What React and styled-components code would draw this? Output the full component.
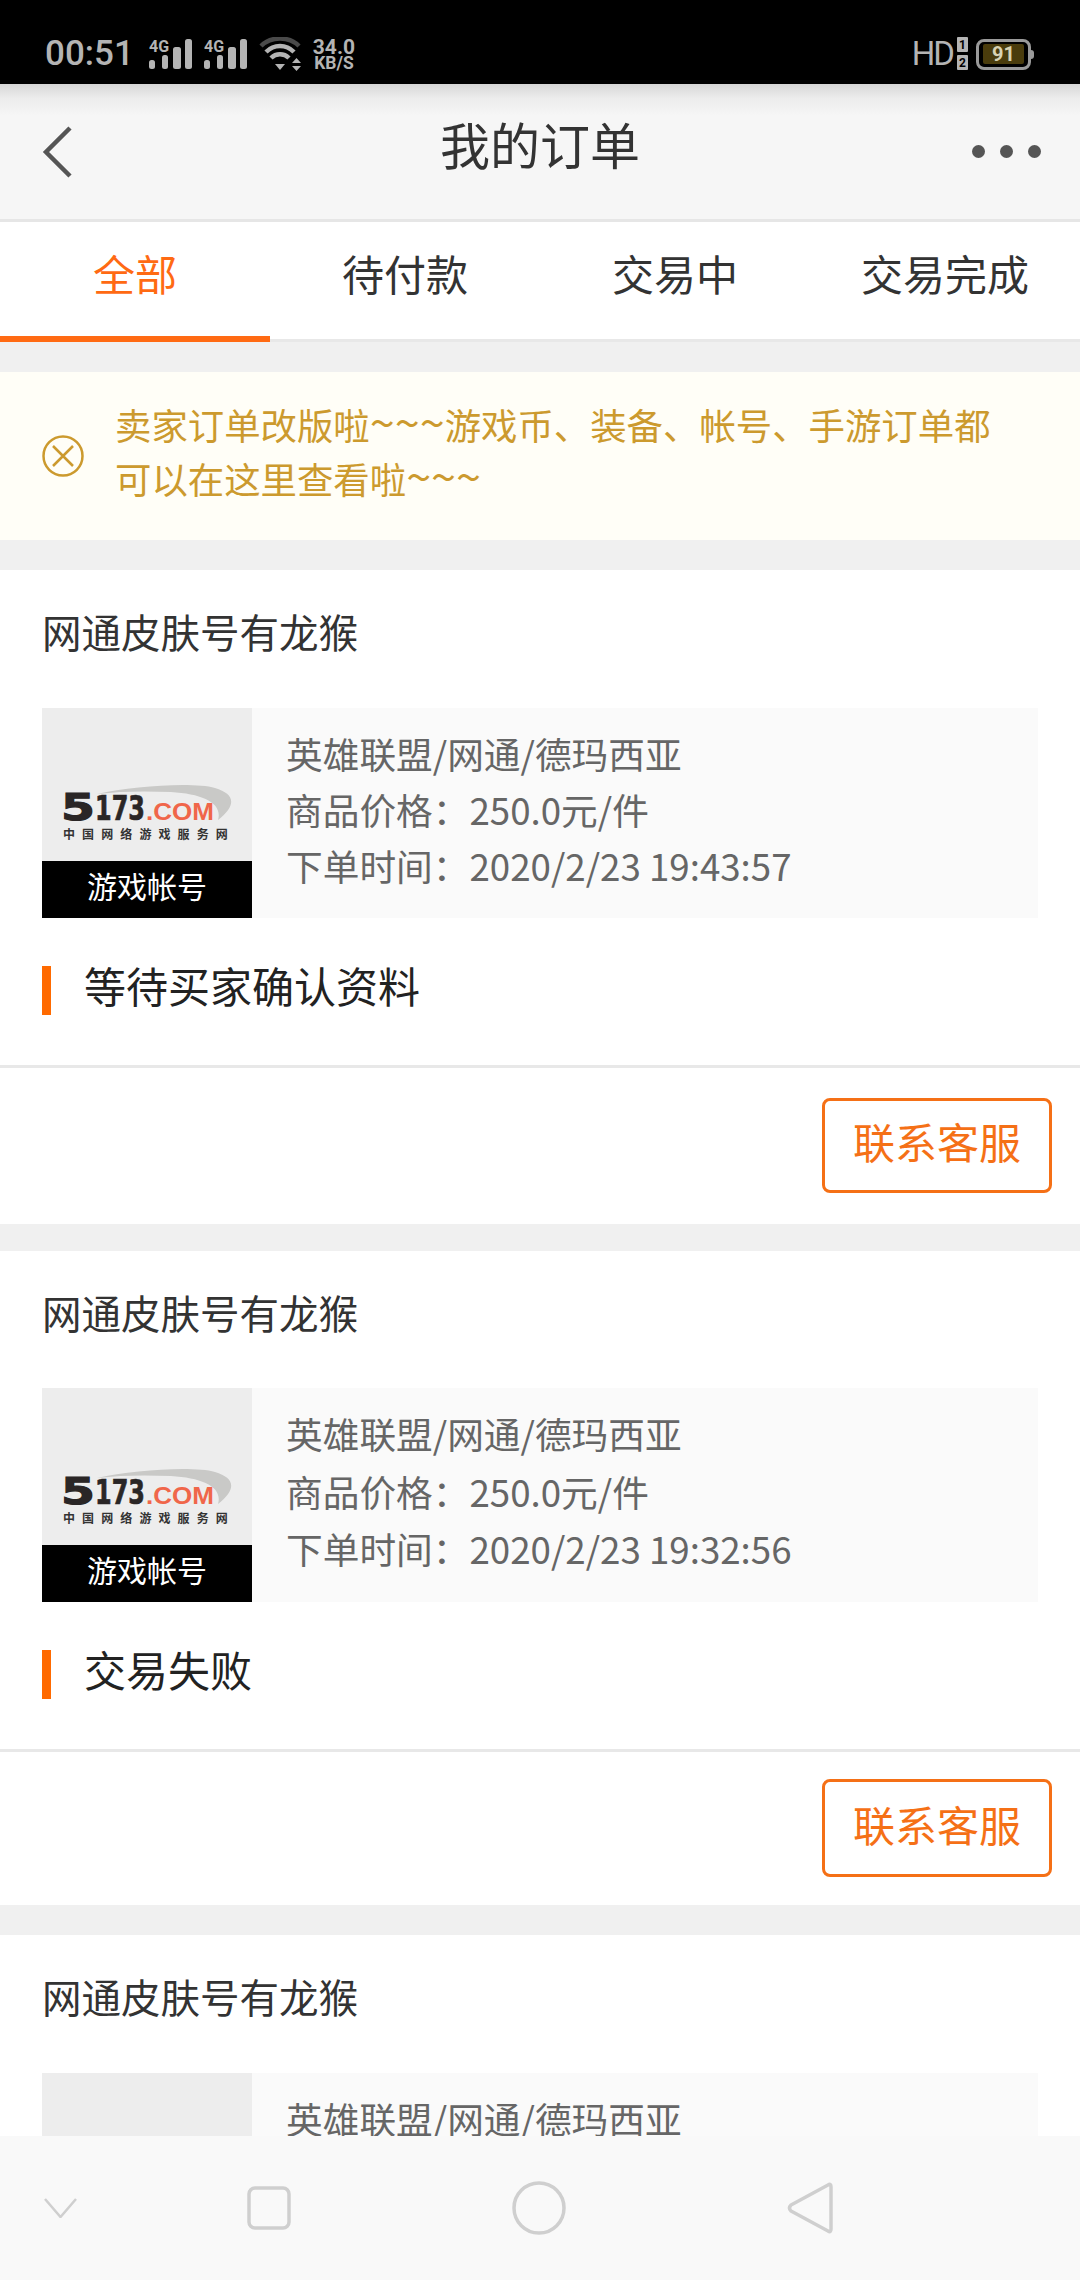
import React from "react";
import styled, { createGlobalStyle } from "styled-components";

const GlobalStyle = createGlobalStyle`
  html, body {
    margin: 0;
    padding: 0;
    background: #f0f0f0;
  }
  * {
    box-sizing: border-box;
  }
`;

const Page = styled.div`
  width: 1080px;
  height: 2280px;
  display: flex;
  flex-direction: column;
  overflow: hidden;
  background: #f0f0f0;
  font-family: "Noto Sans CJK SC", "Noto Sans", sans-serif;
`;

const StatusBar = styled.div`
  height: 84px;
  flex: none;
  background: #000;
  display: flex;
  align-items: center;
  justify-content: space-between;
  padding: 24px 49px 0 45px;
  color: #b4b4b4;
  font-family: Roboto, sans-serif;
`;

const StatusGroup = styled.div`
  display: flex;
  align-items: center;
  gap: ${(p) => p.$gap || 0}px;
`;

const Clock = styled.span`
  font-size: 35px;
  line-height: 40px;
  font-weight: 500;
  margin-right: 3px;
`;

const Speed = styled.span`
  display: flex;
  flex-direction: column;
  font-weight: 700;
  text-align: center;
`;

const SpeedValue = styled.span`
  font-size: 21px;
  line-height: 18px;
`;

const SpeedUnit = styled.span`
  font-size: 17.5px;
  line-height: 15px;
`;

const HdText = styled.span`
  font-size: 33px;
  line-height: 40px;
  letter-spacing: -2px;
  margin-right: 4px;
`;

const Battery = styled.span`
  width: 55px;
  height: 31px;
  border: 3px solid #9a9a9a;
  border-radius: 8px;
  display: flex;
  align-items: center;
  justify-content: center;
  margin-left: 8px;
  position: relative;
  &::after {
    content: "";
    position: absolute;
    right: -6px;
    top: 8px;
    width: 3px;
    height: 9px;
    background: #9a9a9a;
    border-radius: 0 3px 3px 0;
  }
`;

const BatteryFill = styled.span`
  width: 41px;
  height: 20px;
  border-radius: 2px;
  background: #4a3c0c;
  color: #d8d3b4;
  font-size: 20px;
  line-height: 20px;
  font-weight: 700;
  text-align: center;
`;

const Header = styled.header`
  height: 138px;
  flex: none;
  display: flex;
  align-items: center;
  justify-content: space-between;
  padding: 0 39px 0 42px;
  background: linear-gradient(#d6d6d6 0, #ececec 14px, #f6f6f6 32px);
  border-bottom: 3px solid #e6e6e6;
  position: relative;
`;

const HeaderTitle = styled.h1`
  position: absolute;
  left: 0;
  right: 0;
  top: 29px;
  margin: 0;
  text-align: center;
  font-size: 50px;
  line-height: 60px;
  font-weight: 400;
  color: #333;
`;

const Dots = styled.div`
  display: flex;
  gap: 15px;
`;

const Dot = styled.span`
  width: 13px;
  height: 13px;
  border-radius: 50%;
  background: #555;
`;

const Tabs = styled.nav`
  height: 120px;
  flex: none;
  display: flex;
  background: #fff;
  border-bottom: 3px solid #e8e8e8;
`;

const Tab = styled.div`
  width: 270px;
  height: 120px;
  padding-top: 23px;
  text-align: center;
  font-size: 42px;
  line-height: 56px;
  color: ${(p) => (p.$active ? "#ff6a13" : "#333")};
  border-bottom: 6px solid ${(p) => (p.$active ? "#ff6a13" : "transparent")};
`;

const Content = styled.main`
  flex: 1;
  min-height: 0;
  overflow: hidden;
  padding-top: 30px;
`;

const Notice = styled.div`
  height: 168px;
  margin-bottom: 30px;
  display: flex;
  align-items: center;
  gap: 31px;
  padding: 0 40px 0 42px;
  background: #fffef7;
  color: #cc9a2e;
  font-size: 36.4px;
  line-height: 54px;
`;

const NoticeText = styled.p`
  margin: 0;
  width: 900px;
  padding-bottom: 11px;
`;

const Tilde = styled.span`
  font-size: 45px;
  line-height: 0;
`;

const Card = styled.section`
  background: #fff;
  margin-bottom: ${(p) => p.$after}px;
`;

const CardTitle = styled.h2`
  margin: 0;
  height: ${(p) => p.$h}px;
  padding: 33px 0 0 42px;
  font-size: 39.5px;
  line-height: 56px;
  font-weight: 400;
  color: #333;
`;

const Product = styled.div`
  display: flex;
  height: ${(p) => p.$h}px;
  margin: 0 42px;
  background: #fafafa;
`;

const Thumb = styled.div`
  width: 210px;
  flex: none;
  background: #ededed;
  display: flex;
  flex-direction: column;
  justify-content: flex-end;
`;

const ThumbLabel = styled.div`
  height: 57px;
  background: #000;
  color: #fff;
  font-size: 30px;
  line-height: 49px;
  text-align: center;
`;

const Logo = styled.svg`
  display: block;
  width: 172px;
  height: 56px;
  margin: 0 0 20px 21px;
`;

const Info = styled.div`
  padding: 17px 0 0 34px;
  font-size: 36.7px;
  line-height: ${(p) => p.$lh}px;
  color: #666;
`;

const InfoLine = styled.div`
  white-space: nowrap;
`;

const OrderStatus = styled.div`
  height: 147px;
  padding: 48px 0 0 42px;
`;

const StatusLabel = styled.div`
  height: 49px;
  padding-left: 33px;
  border-left: 9px solid #ff6a00;
  font-size: 42px;
  line-height: 38px;
  color: #222;
`;

const CardFoot = styled.div`
  height: ${(p) => p.$h}px;
  border-top: 3px solid #e8e8e8;
  display: flex;
  justify-content: flex-end;
  padding: ${(p) => p.$top}px 28px 0 0;
`;

const ContactButton = styled.button`
  width: 230px;
  height: ${(p) => p.$h}px;
  padding: 0 0 9px;
  background: #fff;
  border: 3px solid #f57016;
  border-radius: 8px;
  color: #f57016;
  font-family: inherit;
  font-size: 42px;
  line-height: 56px;
`;

const NavBar = styled.div`
  height: 144px;
  flex: none;
  background: #f9f9f9;
  position: relative;
  z-index: 1;
  display: flex;
`;

const NavSlot = styled.div`
  width: ${(p) => p.$w}px;
  display: flex;
  align-items: center;
  justify-content: center;
`;

const Signal = () => (
  <svg width="43" height="32" viewBox="0 0 43 32" style={{ display: "block" }}>
    <text x="0" y="14" fontFamily="Roboto, sans-serif" fontWeight="700" fontSize="16" fill="#b4b4b4">4G</text>
    <rect x="0" y="22" width="6" height="9" rx="2.5" fill="#b4b4b4" />
    <rect x="13" y="17" width="6" height="14" rx="2.5" fill="#b4b4b4" />
    <rect x="24" y="9" width="8" height="22" rx="2.5" fill="#b4b4b4" />
    <rect x="36" y="1" width="7" height="30" rx="2.5" fill="#b4b4b4" />
  </svg>
);

const Wifi = () => (
  <svg width="42" height="34" viewBox="0 0 42 34" fill="none">
    <path d="M2 9 C12 -1 30 -1 40 9" stroke="#4a4a4a" strokeWidth="4.5" />
    <path d="M7 15 C15 7 27 7 35 15" stroke="#b4b4b4" strokeWidth="4.5" />
    <path d="M12 21 C17 16 25 16 30 21" stroke="#b4b4b4" strokeWidth="4.5" />
    <path d="M16 27 L26 27 L21 33 Z" fill="#b4b4b4" />
    <path d="M33 26 L37.5 21 L42 26 Z M33 29 L42 29 L37.5 34 Z" fill="#b4b4b4" />
  </svg>
);

const SimBadge = () => (
  <svg width="11" height="34" viewBox="0 0 11 34" style={{ display: "block" }}>
    <rect x="0" y="0" width="11" height="15" rx="1" fill="#b4b4b4" />
    <rect x="0" y="18" width="11" height="15" rx="1" fill="#b4b4b4" />
    <text x="5.5" y="12" textAnchor="middle" fontFamily="Roboto, sans-serif" fontWeight="700" fontSize="12" fill="#000">1</text>
    <text x="5.5" y="30" textAnchor="middle" fontFamily="Roboto, sans-serif" fontWeight="700" fontSize="12" fill="#000">2</text>
  </svg>
);

const LogoMark = () => (
  <Logo viewBox="0 0 172 56">
    <path d="M34 9 C70 1 130 -3 152 3 C172 9 174 20 155 35 C160 18 140 9 108 7 C84 6 58 6 34 9 Z" fill="#c9c9c7" />
    <text x="-2" y="35" fontFamily="'DejaVu Sans', sans-serif" fontWeight="700" fontSize="38" textLength="34" lengthAdjust="spacingAndGlyphs" stroke="#2a2626" strokeWidth="1.2" fill="#2a2626">5</text>
    <text x="32" y="35" fontFamily="'DejaVu Sans', sans-serif" fontWeight="700" fontSize="33" textLength="50" lengthAdjust="spacingAndGlyphs" stroke="#2a2626" strokeWidth="0.7" fill="#2a2626">173</text>
    <text x="83" y="35" fontFamily="'Liberation Sans', sans-serif" fontWeight="700" fontSize="24" textLength="68" lengthAdjust="spacingAndGlyphs" fill="#f0664a">.COM</text>
    <text x="0" y="54" fontFamily="'Noto Sans CJK SC', sans-serif" fontWeight="700" fontSize="12" letterSpacing="7.1" fill="#333">中国网络游戏服务网</text>
  </Logo>
);

const orders = [
  { time: "2020/2/23 19:43:57", status: "等待买家确认资料", titleH: 138, productH: 210, lineH: 56, footH: 159, footTop: 30, btnH: 95, after: 27 },
  { time: "2020/2/23 19:32:56", status: "交易失败", titleH: 137, productH: 214, lineH: 57.5, footH: 156, footTop: 27, btnH: 98, after: 30 },
  { time: "2020/2/23 19:30:12", status: "交易失败", titleH: 138, productH: 210, lineH: 56, footH: 159, footTop: 30, btnH: 95, after: 0 },
];

const tabs = ["全部", "待付款", "交易中", "交易完成"];

export default function App() {
  return (
    <Page>
      <GlobalStyle />
      <StatusBar>
        <StatusGroup $gap={12}>
          <Clock>00:51</Clock>
          <Signal />
          <Signal />
          <Wifi />
          <Speed>
            <SpeedValue>34.0</SpeedValue>
            <SpeedUnit>KB/S</SpeedUnit>
          </Speed>
        </StatusGroup>
        <StatusGroup>
          <HdText>HD</HdText>
          <SimBadge />
          <Battery>
            <BatteryFill>91</BatteryFill>
          </Battery>
        </StatusGroup>
      </StatusBar>

      <Header>
        <svg width="32" height="54" viewBox="0 0 32 54" fill="none">
          <path d="M28 3 L4 27 L28 51" stroke="#555" strokeWidth="4.5" />
        </svg>
        <HeaderTitle>我的订单</HeaderTitle>
        <Dots>
          <Dot />
          <Dot />
          <Dot />
        </Dots>
      </Header>

      <Tabs>
        {tabs.map((t, i) => (
          <Tab key={t} $active={i === 0}>
            {t}
          </Tab>
        ))}
      </Tabs>

      <Content>
        <Notice>
          <svg width="42" height="42" viewBox="0 0 42 42" fill="none" stroke="#cc9a2e" strokeWidth="2.5">
            <circle cx="21" cy="21" r="19.5" />
            <path d="M11 11 L31 31 M31 11 L11 31" />
          </svg>
          <NoticeText>
            卖家订单改版啦<Tilde>~~~</Tilde>游戏币、装备、帐号、手游订单都可以在这里查看啦<Tilde>~~~</Tilde>
          </NoticeText>
        </Notice>

        {orders.map((o, i) => (
          <Card key={i} $after={o.after}>
            <CardTitle $h={o.titleH}>网通皮肤号有龙猴</CardTitle>
            <Product $h={o.productH}>
              <Thumb>
                <LogoMark />
                <ThumbLabel>游戏帐号</ThumbLabel>
              </Thumb>
              <Info $lh={o.lineH}>
                <InfoLine>英雄联盟/网通/德玛西亚</InfoLine>
                <InfoLine>商品价格：250.0元/件</InfoLine>
                <InfoLine>下单时间：{o.time}</InfoLine>
              </Info>
            </Product>
            <OrderStatus>
              <StatusLabel>{o.status}</StatusLabel>
            </OrderStatus>
            <CardFoot $h={o.footH} $top={o.footTop}>
              <ContactButton $h={o.btnH}>联系客服</ContactButton>
            </CardFoot>
          </Card>
        ))}
      </Content>

      <NavBar>
        <NavSlot $w={120}>
          <svg width="33" height="20" viewBox="0 0 33 20" fill="none" stroke="#cfcfcf" strokeWidth="2.5">
            <path d="M1 1 L16.5 19 L32 1" />
          </svg>
        </NavSlot>
        <NavSlot $w={298}>
          <svg width="44" height="44" viewBox="0 0 44 44" fill="none" stroke="#cfcfcf" strokeWidth="3.5">
            <rect x="2" y="2" width="40" height="40" rx="6" />
          </svg>
        </NavSlot>
        <NavSlot $w={242}>
          <svg width="54" height="54" viewBox="0 0 54 54" fill="none" stroke="#cfcfcf" strokeWidth="3.5">
            <circle cx="27" cy="27" r="25" />
          </svg>
        </NavSlot>
        <NavSlot $w={300}>
          <svg width="46" height="52" viewBox="0 0 46 52" fill="none" stroke="#cfcfcf" strokeWidth="3.5" strokeLinejoin="round">
            <path d="M41 3 Q44 1 44 5 V47 Q44 51 41 49 L4 29 Q1 26 4 23 Z" />
          </svg>
        </NavSlot>
      </NavBar>
    </Page>
  );
}
